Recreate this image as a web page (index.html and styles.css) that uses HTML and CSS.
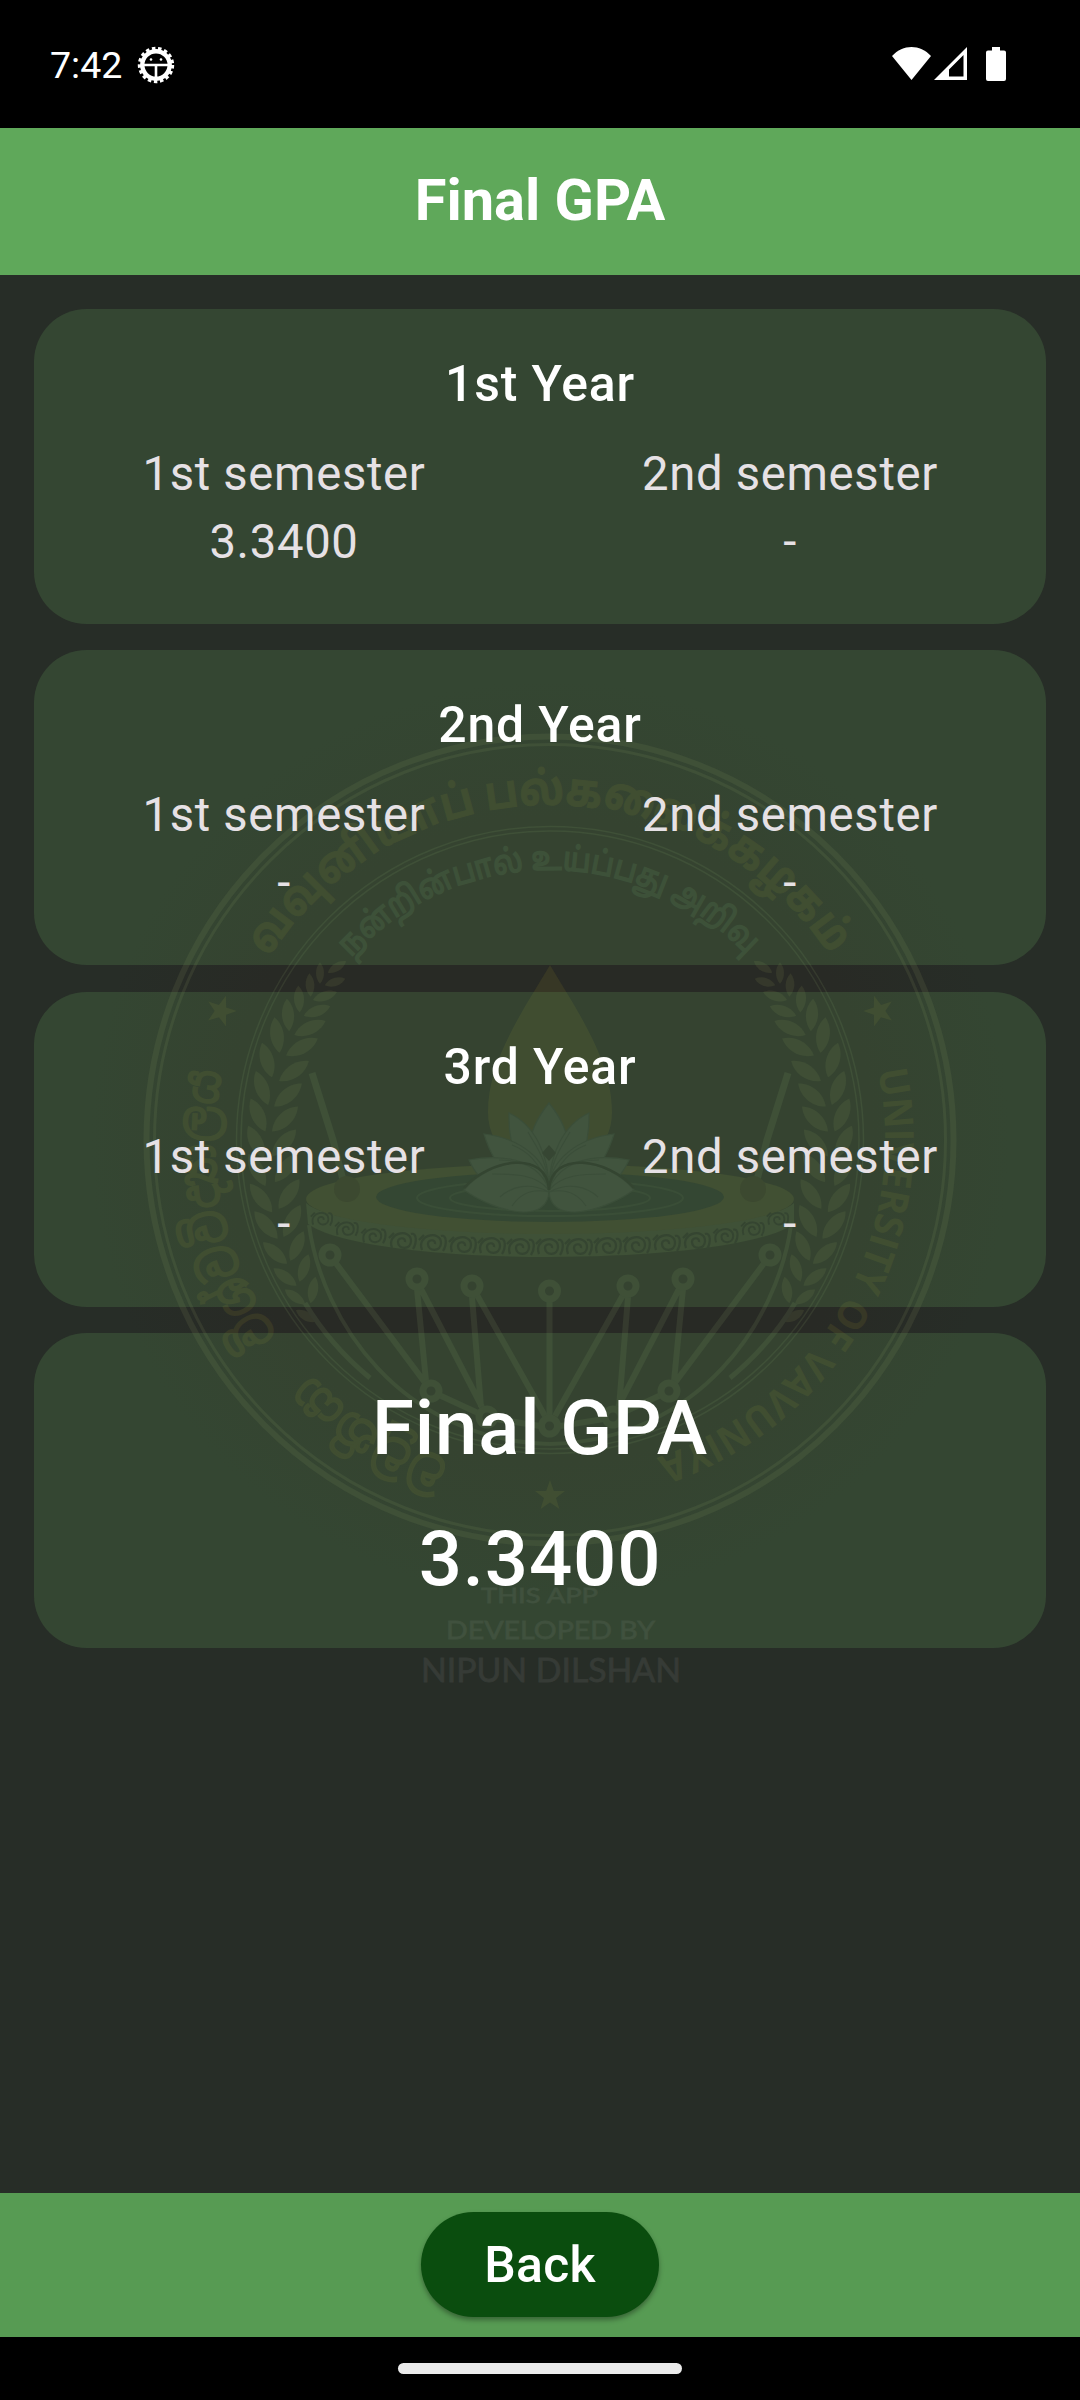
FILE: index.html
```html
<!DOCTYPE html>
<html lang="en">
<head>
<meta charset="utf-8">
<title>Final GPA</title>
<link rel="stylesheet" href="styles.css">
</head>
<body>
<div class="screen">
  <div class="status-bar">
    <div class="status-left">
      <span class="clock">7:42</span>
      <svg class="icon-debug" viewBox="-19 -19 38 38">
        <circle r="13.7" fill="none" stroke="#fff" stroke-width="4.400"/>
        <circle r="16.200" fill="none" stroke="#fff" stroke-width="4" stroke-dasharray="3.400 2.588"/>
        <path d="M-12 0H12M0 0V14" stroke="#fff" stroke-width="2.6"/>
        <circle cx="-5" cy="-5.500" r="1.300" fill="#fff"/><circle cx="5" cy="-5.500" r="1.300" fill="#fff"/>
      </svg>
    </div>
    <div class="status-right">
      <svg class="icon-wifi" viewBox="0 0 39 33"><path d="M0 9C11-3 28-3 39 9L19.500 33Z" fill="#fff"/></svg>
      <svg class="icon-signal" viewBox="0 0 33 33"><path fill-rule="evenodd" d="M33 0V33H0ZM29.500 8L15 22.500V29.500H29.500Z" fill="#fff"/></svg>
      <svg class="icon-battery" viewBox="0 0 20 34"><path d="M6 0H14V3.500H18Q20 3.500 20 5.500V32Q20 34 18 34H2Q0 34 0 32V5.500Q0 3.500 2 3.500H6Z" fill="#fff"/></svg>
    </div>
  </div>

  <header class="app-bar"><h1 class="app-title">Final GPA</h1></header>

  <main class="content">
    <svg class="watermark" viewBox="0 275 1080 1918" aria-hidden="true">
      <defs>
        <radialGradient id="glow" gradientUnits="userSpaceOnUse" cx="550" cy="1140" r="460">
          <stop offset="0" stop-color="#282a25"/><stop offset=".7" stop-color="#282a25"/><stop offset="1" stop-color="#272d27"/>
        </radialGradient>
        <path id="leaf" d="M0-18C9-8 9 8 0 18C-9 8-9-8 0-18Z"/>
        <path id="star" d="M0-16L3.800-5H15L6 2L9.400 13L0 6.500L-9.400 13L-6 2L-15-5H-3.800Z"/>
        <path id="scroll" d="M-11 7C-17-9 8-13 8 0C8 9-5 9-5 1C-5-4 3-4 2 1M8-7C14-9 14 2 10 8M-9-8L-14-3"/>
        <path id="arcTop" d="M269 957.500A335 335 0 0 1 831 957.500"/>
        <path id="arcMotto" d="M351 957.600A270 270 0 0 1 749 957.600"/>
        <path id="arcRight" d="M877.700 1070.400A335 335 0 0 1 650.700 1459.500"/>
        <path id="arcLeft" d="M449.300 1459.500A335 335 0 0 1 222.300 1070.400"/>
        <g id="half">
          <g class="wm-leaf">
            <use href="#leaf" transform="translate(320 973) scale(.6)"/>
            <use href="#leaf" transform="translate(310 985) rotate(-3) scale(.65)"/>
            <use href="#leaf" transform="translate(299 999) rotate(-3) scale(.75)"/>
            <use href="#leaf" transform="translate(288 1015) rotate(-4) scale(.9)"/>
            <use href="#leaf" transform="translate(277 1035) rotate(-8)"/>
            <use href="#leaf" transform="translate(267 1060) rotate(-16)"/>
            <use href="#leaf" transform="translate(262 1088) rotate(-20)"/>
            <use href="#leaf" transform="translate(258 1115) rotate(-24)"/>
            <use href="#leaf" transform="translate(256 1142) rotate(-26)"/>
            <use href="#leaf" transform="translate(257 1170) rotate(-28)"/>
            <use href="#leaf" transform="translate(261 1198) rotate(-38)"/>
            <use href="#leaf" transform="translate(266 1225) rotate(-40)"/>
            <use href="#leaf" transform="translate(275 1253) rotate(-48) scale(.9)"/>
            <use href="#leaf" transform="translate(285 1277) rotate(-53) scale(.8)"/>
            <use href="#leaf" transform="translate(295 1297) rotate(-54) scale(.7)"/>
            <use href="#leaf" transform="translate(306 1316) rotate(-60) scale(.65)"/>
            <use href="#leaf" transform="translate(337 967) rotate(58) scale(.6)"/>
            <use href="#leaf" transform="translate(335 982) rotate(72) scale(.6)"/>
            <use href="#leaf" transform="translate(325 996) rotate(72) scale(.7)"/>
            <use href="#leaf" transform="translate(317 1011) rotate(70) scale(.78)"/>
            <use href="#leaf" transform="translate(310 1028) rotate(66) scale(.95)"/>
            <use href="#leaf" transform="translate(302 1047) rotate(62)"/>
            <use href="#leaf" transform="translate(294 1071) rotate(56)"/>
            <use href="#leaf" transform="translate(288 1095) rotate(50)"/>
            <use href="#leaf" transform="translate(285 1119) rotate(46)"/>
            <use href="#leaf" transform="translate(284 1143) rotate(42)"/>
            <use href="#leaf" transform="translate(286 1168) rotate(38)"/>
            <use href="#leaf" transform="translate(289 1194) rotate(35)"/>
            <use href="#leaf" transform="translate(292 1221) rotate(28)"/>
            <use href="#leaf" transform="translate(297 1246) rotate(24) scale(.9)"/>
            <use href="#leaf" transform="translate(304 1268) rotate(18) scale(.8)"/>
            <use href="#leaf" transform="translate(313 1290) rotate(10) scale(.75)"/>
          </g>
          <use href="#star" class="wm-gold" transform="translate(221 1011) rotate(18)"/>
          <g class="wm-line">
            <path d="M309 1225C322 1320 400 1440 550 1444" stroke-width="4"/>
            <path d="M305 1303Q330 1345 370 1378" stroke-width="5"/>
            <path d="M312 1073L333 1140L343 1180" stroke-width="7"/>
            <path d="M335 1262L426 1384M417 1289L426 1381M421 1289L482 1407M472 1297L481 1407M477 1295L545 1416M439 1395L478 1413M496 1419L540 1426" stroke-width="6"/>
            <g stroke-width="7"><circle cx="330" cy="1255" r="8"/><circle cx="417" cy="1279" r="8"/><circle cx="472" cy="1286" r="8"/><circle cx="431" cy="1391" r="8"/><circle cx="487" cy="1417" r="8"/></g>
          </g>
        </g>
        <g id="petals">
          <path d="M509 1113C535 1125 549 1155 549 1190C520 1175 508 1150 509 1113Z"/>
          <path d="M484 1134C520 1138 549 1160 549 1190C515 1190 495 1170 484 1134Z"/>
          <path d="M469 1160C510 1152 545 1165 549 1190C520 1205 485 1195 469 1160Z"/>
          <path d="M464 1190C490 1158 549 1150 549 1190C549 1225 497 1213 464 1190Z"/>
          <path class="wm-vein" d="M549 1190C540 1165 518 1160 499 1160M549 1190C535 1174 515 1174 492 1174M549 1192C530 1182 512 1186 500 1197M549 1192C532 1188 520 1194 512 1206M549 1190C548 1160 535 1145 528 1132M549 1190C540 1160 525 1150 512 1145"/>
          <path class="wm-edge" d="M464 1188C490 1158 547 1150 549 1190"/>
        </g>
      </defs>

      <rect x="0" y="275" width="1080" height="1918" fill="url(#glow)"/>
      <g class="wm-line">
        <circle cx="550" cy="1140" r="403.500" stroke-width="6"/>
        <circle cx="550" cy="1140" r="395.500" stroke-width="3"/>
        <circle cx="550" cy="1140" r="313.500" stroke-width="1.500"/>
        <circle cx="550" cy="1140" r="309" stroke-width="1.500"/>
      </g>
      <use href="#half"/>
      <use href="#half" transform="translate(1100 0) scale(-1 1)"/>
      <use href="#star" class="wm-gold" transform="translate(550 1496)"/>
      <g class="wm-line">
        <path d="M549.500 1300V1417" stroke-width="6"/>
        <g stroke-width="7"><circle cx="549.500" cy="1291" r="8"/><circle cx="549.500" cy="1426" r="8"/></g>
      </g>

      <path class="wm-flame" d="M550 965C580 1015 612 1062 612 1112C612 1150 580 1170 550 1170C520 1170 488 1150 488 1112C488 1062 520 1015 550 965Z"/>
      <path class="wm-band" d="M306 1203C350 1242 750 1242 794 1203V1224C730 1268 370 1268 308 1224Z"/>
      <ellipse class="wm-bowl" cx="550" cy="1199" rx="244" ry="35"/>
      <ellipse class="wm-water" cx="550" cy="1197" rx="174" ry="25"/>
      <g class="wm-ripple"><ellipse cx="550" cy="1198" rx="133" ry="18"/><ellipse cx="550" cy="1198" rx="100" ry="13"/></g>
      <circle class="wm-knob" cx="347" cy="1189" r="13"/><circle class="wm-knob" cx="753" cy="1189" r="13"/>
      <g class="wm-scroll">
        <use href="#scroll" transform="translate(322 1219) scale(.8)"/><use href="#scroll" transform="translate(347 1229) scale(.85)"/>
        <use href="#scroll" transform="translate(374 1236) scale(.9)"/><use href="#scroll" transform="translate(403 1241)"/>
        <use href="#scroll" transform="translate(433 1243)"/><use href="#scroll" transform="translate(463 1245)"/>
        <use href="#scroll" transform="translate(492 1246)"/><use href="#scroll" transform="translate(521 1247)"/>
        <use href="#scroll" transform="translate(550 1247)"/><use href="#scroll" transform="translate(579 1247)"/>
        <use href="#scroll" transform="translate(608 1246)"/><use href="#scroll" transform="translate(637 1245)"/>
        <use href="#scroll" transform="translate(667 1243)"/><use href="#scroll" transform="translate(697 1241)"/>
        <use href="#scroll" transform="translate(726 1236) scale(.9)"/><use href="#scroll" transform="translate(753 1229) scale(.85)"/>
        <use href="#scroll" transform="translate(778 1219) scale(.8)"/>
      </g>
      <g class="wm-lotus">
        <path d="M549 1103C575 1135 575 1165 549 1192C523 1165 523 1135 549 1103Z"/>
        <use href="#petals"/>
        <use href="#petals" transform="translate(1098 0) scale(-1 1)"/>
        <path class="wm-core" d="M549 1145L556 1153L549 1161L542 1153Z"/>
      </g>

      <g class="wm-text">
        <text lang="ta" class="wm-name"><textPath href="#arcTop" textLength="664" lengthAdjust="spacingAndGlyphs">வவுனியாப் பல்கலைக்கழகம்</textPath></text>
        <text lang="ta" class="wm-motto"><textPath href="#arcMotto" textLength="444" lengthAdjust="spacingAndGlyphs">நன்றின்பால் உய்ப்பது அறிவு</textPath></text>
        <text class="wm-english"><textPath href="#arcRight" textLength="488" lengthAdjust="spacingAndGlyphs">UNIVERSITY OF VAVUNIYA</textPath></text>
        <text lang="si" class="wm-sinhala"><textPath href="#arcLeft" textLength="165" lengthAdjust="spacingAndGlyphs">වවුනියා</textPath></text>
        <text lang="si" class="wm-sinhala"><textPath href="#arcLeft" startOffset="215" textLength="277" lengthAdjust="spacingAndGlyphs">විශ්වවිද්‍යාලය</textPath></text>
      </g>
      <g class="wm-credit">
        <text x="481" y="1603" font-size="22" textLength="117" lengthAdjust="spacingAndGlyphs">THIS APP</text>
        <text x="446" y="1639" font-size="25" textLength="209" lengthAdjust="spacingAndGlyphs">DEVELOPED BY</text>
        <text x="421" y="1682" font-size="33" textLength="260" lengthAdjust="spacingAndGlyphs">NIPUN DILSHAN</text>
      </g>
    </svg>

    <section class="card">
      <h2 class="card-title">1st Year</h2>
      <div class="semesters">
        <div class="semester"><span>1st semester</span><span>3.3400</span></div>
        <div class="semester"><span>2nd semester</span><span>-</span></div>
      </div>
    </section>
    <section class="card">
      <h2 class="card-title">2nd Year</h2>
      <div class="semesters">
        <div class="semester"><span>1st semester</span><span>-</span></div>
        <div class="semester"><span>2nd semester</span><span>-</span></div>
      </div>
    </section>
    <section class="card">
      <h2 class="card-title">3rd Year</h2>
      <div class="semesters">
        <div class="semester"><span>1st semester</span><span>-</span></div>
        <div class="semester"><span>2nd semester</span><span>-</span></div>
      </div>
    </section>
    <section class="card card-final">
      <h2 class="final-line">Final GPA</h2>
      <div class="final-line">3.3400</div>
    </section>
  </main>

  <footer class="bottom-bar"><button class="back-button" type="button">Back</button></footer>
  <div class="nav-bar"><div class="nav-handle"></div></div>
</div>
</body>
</html>
```
FILE: styles.css
```css
* { box-sizing: border-box; }
body { margin: 0; background: #000; font-family: Roboto, "Liberation Sans", sans-serif; color: #fff; }
h1, h2 { margin: 0; }
.screen { width: 1080px; height: 2400px; display: flex; flex-direction: column; overflow: hidden; }

.status-bar { height: 128px; display: flex; justify-content: space-between; padding: 0 74px 0 50px; background: #000; }
.status-left { display: flex; align-items: flex-start; gap: 15px; padding-top: 46px; }
.clock { font-size: 37.5px; line-height: 38px; width: 72px; white-space: nowrap; }
.icon-debug { width: 38px; height: 38px; }
.status-right { display: flex; align-items: flex-start; padding-top: 47px; }
.icon-wifi { width: 39px; height: 33px; margin-right: 3px; }
.icon-signal { width: 33px; height: 33px; margin-right: 19px; }
.icon-battery { width: 20px; height: 34px; }

.app-bar { height: 147px; display: flex; align-items: center; justify-content: center; background: #5fa85a; }
.app-title { font-size: 57.75px; font-weight: 700; line-height: 68px; padding-bottom: 4px; }

.content { position: relative; isolation: isolate; height: 1917.5px; display: flex; flex-direction: column; gap: 26.25px; padding: 34px 34px 0; background: #272d27; border-bottom: 1px solid #3c5a3b; }
.watermark { position: absolute; z-index: -1; left: 0; top: 0; width: 1080px; height: 1918px; }

.card { height: 315px; flex: none; display: flex; flex-direction: column; align-items: center; border-radius: 52.5px; padding-top: 45px; background: rgba(98, 160, 90, .22); }
.card-title { font-size: 49.875px; font-weight: 500; line-height: 60px; letter-spacing: .87px; }
.semesters { width: 100%; display: grid; grid-template-columns: 1fr 1fr; margin-top: 27px; }
.semester { display: flex; flex-direction: column; align-items: center; font-size: 47.25px; line-height: 67.5px; letter-spacing: .66px; padding-right: 6px; color: #e6e1e5; }
.card-final { padding-top: 30px; }
.final-line { font-size: 76.125px; font-weight: 500; line-height: 131px; letter-spacing: .87px; }

.bottom-bar { height: 144.5px; display: flex; justify-content: center; align-items: flex-start; padding-top: 19.5px; background: #579b53; }
.back-button { width: 238px; height: 105px; border: 0; border-radius: 52.5px; background: #0a4d0e; color: #fff; font: 500 49.875px/60px Roboto, sans-serif; letter-spacing: .26px; padding: 0; box-shadow: 0 3px 5px rgba(0, 0, 0, .35); }
.nav-bar { height: 63px; display: flex; justify-content: center; align-items: flex-start; padding-top: 26px; background: #000; }
.nav-handle { width: 284px; height: 11px; border-radius: 6px; background: #ebebeb; }

.wm-line { fill: none; stroke: #353a2e; }
.wm-leaf { fill: #35382b; }
.wm-gold { fill: #373827; }
.wm-flame { fill: #373725; }
.wm-band { fill: #353b2d; }
.wm-bowl { fill: #383a28; }
.wm-water { fill: #272f28; }
.wm-ripple { fill: none; stroke: #2f382e; stroke-width: 2; }
.wm-knob { fill: #313124; }
.wm-scroll { fill: none; stroke: #282c26; stroke-width: 2.2; }
.wm-lotus { fill: #383f37; stroke: #303830; stroke-width: 1.2; }
.wm-vein { fill: none; }
.wm-edge { fill: none; stroke: #272c26; stroke-width: 2.5; }
.wm-core { fill: #292e28; stroke: none; }
.wm-text { fill: #373826; font-weight: 700; }
.wm-name { font-family: "Noto Sans Tamil", "Noto Sans", sans-serif; font-size: 46px; stroke: #373826; stroke-width: 1; }
.wm-motto { font-family: "Noto Sans Tamil", "Noto Sans", sans-serif; font-size: 33px; font-weight: 500; fill: #333c30; stroke: #333c30; stroke-width: 1.3; }
.wm-english { font-family: "Open Sans", sans-serif; font-size: 40px; }
.wm-sinhala { font-family: "Noto Sans Sinhala", "Noto Sans", sans-serif; font-size: 52px; font-weight: 400; stroke: #373826; stroke-width: 2; }
.wm-credit { font-family: Lato, sans-serif; fill: #363b36; stroke: #363b36; stroke-width: .8; }
```
